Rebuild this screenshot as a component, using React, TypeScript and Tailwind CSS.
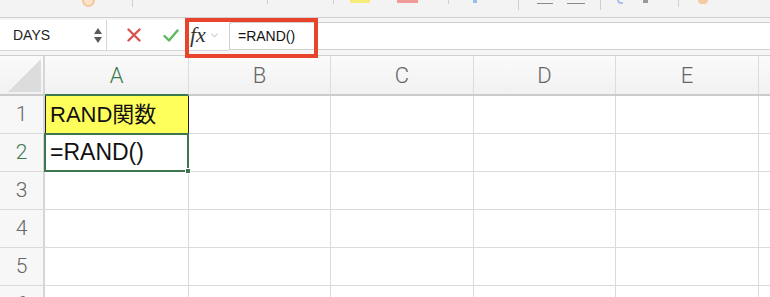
import React from 'react';

const cols = ['A', 'B', 'C', 'D', 'E', ''];
const colW = ['w-[144px]', 'w-[142px]', 'w-[143px]', 'w-[142px]', 'w-[143px]', 'flex-1'];
const rows = [1, 2, 3, 4, 5, 6];

const TopStrip = () => (
  <div className="h-[17px] bg-[#f3f3f3] flex items-start overflow-hidden">
    {/* clipped ribbon icons */}
    <div className="ml-[82px] w-[13px] h-[7px] rounded-b-full border-2 border-t-0 border-[#f3c89a] bg-[#fbe3c9]" />
    <div className="ml-[37px] w-px h-[7px] bg-[#cfcfcf]" />
    <div className="ml-[134px] w-px h-[4px] bg-[#cfcfcf]" />
    <div className="ml-[65px] w-px h-[4px] bg-[#cfcfcf]" />
    <div className="ml-[16px] w-[20px] h-[3px] bg-[#f6ec7a]" />
    <div className="ml-[27px] w-[21px] h-[3px] bg-[#f19a9a]" />
    <div className="ml-[30px] w-px h-[4px] bg-[#cfcfcf]" />
    <div className="ml-[24px] w-[4px] h-[3px] bg-[#9bbbe8]" />
    <div className="ml-[41px] w-px h-[10px] bg-[#cfcfcf]" />
    <div className="ml-[18px] w-[16px] h-[4px] border-b border-[#8a8a8a]" />
    <div className="ml-[14px] w-[18px] h-[4px] border-b border-[#8a8a8a]" />
    <div className="ml-[15px] w-px h-[10px] bg-[#cfcfcf]" />
    <div className="ml-[16px] w-[6px] h-[4px] border-b-2 border-l-2 border-[#a9c4ea] rounded-bl" />
    <div className="ml-[20px] w-[5px] h-[3px] bg-[#9a9a9a]" />
    <div className="ml-[30px] w-px h-[7px] bg-[#cfcfcf]" />
    <div className="ml-[19px] w-[10px] h-[4px] rounded-b-full bg-[#f6c9a0]" />
  </div>
);

const FormulaBar = () => (
  <div className="relative h-[38px] bg-[#f5f5f5] border-t border-[#cfcfcf] flex items-start">
    {/* name box */}
    <div className="mt-[2px] w-[107px] h-[31px] bg-white border-r border-b border-[#d6d6d6] flex items-center pl-[13px] pr-[4px]">
      <span className="text-[14px] text-[#222] font-['Liberation_Sans',sans-serif] flex-1">DAYS</span>
      <div className="flex flex-col gap-[3px] items-center">
        <svg width="8" height="6" viewBox="0 0 8 6"><path d="M4 0 L8 6 L0 6 Z" fill="#5a5a5a" /></svg>
        <svg width="8" height="6" viewBox="0 0 8 6"><path d="M0 0 L8 0 L4 6 Z" fill="#5a5a5a" /></svg>
      </div>
    </div>
    <div className="mt-[2px] h-[31px] w-[78px] bg-white border-b border-[#d6d6d6] flex items-center">
      <svg className="ml-[20px]" width="14" height="14" viewBox="0 0 14 14">
        <path d="M1.5 1.5 L12.5 12.5 M12.5 1.5 L1.5 12.5" stroke="#d9534f" strokeWidth="2.4" strokeLinecap="round" />
      </svg>
      <svg className="ml-[22px]" width="16" height="13" viewBox="0 0 16 13">
        <path d="M1.5 7 L6 11.5 L14.5 1.5" stroke="#5cb85c" strokeWidth="2.4" fill="none" strokeLinecap="round" strokeLinejoin="round" />
      </svg>
    </div>
    <div className="mt-[2px] h-[31px] w-[44px] bg-white border-b border-[#d6d6d6] flex items-center">
      <span className="ml-[5px] text-[22px] italic text-[#333] font-['Liberation_Serif',serif] leading-none">fx</span>
      <svg className="ml-[5px]" width="7" height="5" viewBox="0 0 7 5">
        <path d="M0.5 0.5 L3.5 4 L6.5 0.5" stroke="#bdbdbd" strokeWidth="1" fill="none" />
      </svg>
    </div>
    <div className="mt-[4px] flex-1 h-[28px] bg-white border-t border-b border-l border-[#cfcfcf] rounded-tl-[3px] flex items-center pl-[8px]">
      <span className="text-[14px] text-[#111] font-['Liberation_Sans',sans-serif]">=RAND()</span>
    </div>
    {/* annotation box */}
    <div className="absolute left-[185px] top-[0px] w-[133px] h-[40px] border-[4px] border-[#e8442b]" />
  </div>
);

const Grid = () => (
  <div className="border-t border-[#d0d0d0] font-['Liberation_Sans','Noto_Sans_CJK_JP',sans-serif]">
    {/* column headers */}
    <div className="flex h-[40px] bg-gradient-to-b from-[#fbfbfb] to-[#f1f1f1] border-b-2 border-[#cbcbcb]">
      <div className="w-[45px] border-r-2 border-[#d6d6d6] flex items-end justify-end pr-[2px] pb-[2px]">
        <svg width="33" height="33" viewBox="0 0 33 33"><path d="M33 0 L33 33 L0 33 Z" fill="#dcdcdc" /></svg>
      </div>
      {cols.map((c, i) => (
        <div
          key={i}
          className={`${colW[i]} ${i === 5 ? '' : 'border-r'} border-[#dcdcdc] flex items-center justify-center font-['Roboto',sans-serif] font-light text-[22px] ${c === 'A' ? 'text-[#3a7a4f] border-b-2 border-b-[#3a7a4f] -mb-[2px]' : 'text-[#666]'}`}
        >
          {c}
        </div>
      ))}
    </div>
    {rows.map((r) => (
      <div key={r} className="flex h-[38px] border-b border-[#dadada]">
        <div className={`w-[45px] bg-[#f7f7f7] border-r-2 border-[#d6d6d6] flex items-center justify-center font-['Roboto',sans-serif] font-light text-[21px] ${r === 2 ? 'text-[#3a7a4f]' : 'text-[#666]'}`}>
          {r}
        </div>
        {cols.map((_, i) => {
          if (i === 0 && r === 1) {
            return (
              <div key={i} className={`${colW[i]} bg-[#ffff5c] border-r border-l border-[#222] flex items-center pl-[4px] text-[22px] text-[#111]`}>
                RAND関数
              </div>
            );
          }
          if (i === 0 && r === 2) {
            return (
              <div key={i} className={`${colW[i]} relative border-r border-[#dadada] flex items-center pl-[5px] text-[23px] text-[#111]`}>
                =RAND()
                <div className="absolute -left-[1px] -top-[1px] -right-[1px] -bottom-[1px] border-2 border-[#3d7650]" />
                <div className="absolute -right-[3px] -bottom-[3px] w-[6px] h-[6px] bg-[#3d7650] border border-white" />
              </div>
            );
          }
          return <div key={i} className={`${colW[i]} ${i === 5 ? '' : 'border-r'} border-[#dadada] bg-white`} />;
        })}
      </div>
    ))}
  </div>
);

export default function App() {
  return (
    <div className="w-[770px] h-[297px] overflow-hidden bg-white">
      <TopStrip />
      <FormulaBar />
      <Grid />
    </div>
  );
}
